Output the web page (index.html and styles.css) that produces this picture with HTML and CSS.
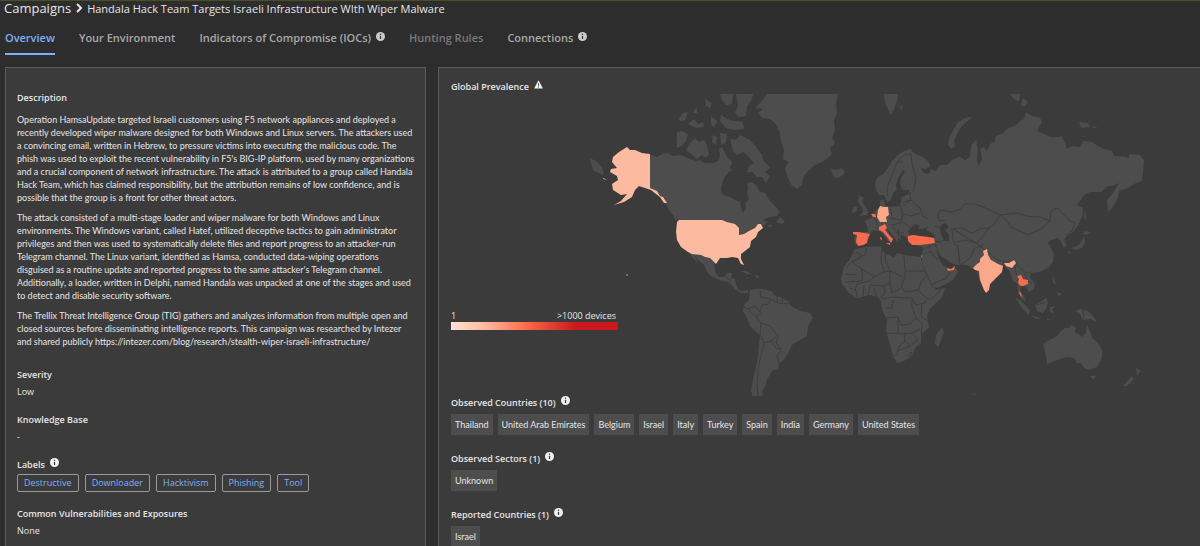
FILE: index.html
```
<!DOCTYPE html>
<html lang="en">
<head>
    <meta charset="UTF-8">
    <meta name="viewport" content="width=device-width, initial-scale=1.0">
    <title>Campaigns - Handala Hack Team</title>
    <link rel="stylesheet" href="styles.css">
</head>
<body>

    <!-- shared icons -->
    <svg class="icon-defs" aria-hidden="true">
        <symbol id="icon-info" viewBox="0 0 10 10">
            <circle cx="5" cy="5" r="5" fill="#f2f2f2"/>
            <path d="M5 4.2v3.6" stroke="#3b3b3b" stroke-width="1.4" fill="none"/>
            <circle cx="5" cy="2.5" r="0.8" fill="#3b3b3b"/>
        </symbol>
        <symbol id="icon-warning" viewBox="0 0 10 10">
            <path d="M5 0.4L9.9 9.4H0.1z" fill="#f2f2f2"/>
            <path d="M5 3.4v3M5 7.2v1.2" stroke="#3b3b3b" stroke-width="1"/>
        </symbol>
    </svg>

    <nav class="breadcrumb">
        <a href="#">Campaigns</a>
        <svg class="chevron" viewBox="0 0 6 10"><path d="M1 1l4 4-4 4" fill="none" stroke="#e6e6e6" stroke-width="2"/></svg>
        <h1>Handala Hack Team Targets Israeli Infrastructure WIth Wiper Malware</h1>
    </nav>

    <div class="tabs">
        <a href="#" class="tab active">Overview</a>
        <a href="#" class="tab">Your Environment</a>
        <a href="#" class="tab">Indicators of Compromise (IOCs)<svg class="info"><use href="#icon-info"/></svg></a>
        <a href="#" class="tab disabled">Hunting Rules</a>
        <a href="#" class="tab">Connections<svg class="info"><use href="#icon-info"/></svg></a>
    </div>

    <main class="panels">
        <section class="panel details">
            <h2>Description</h2>
            <div class="description">
                <p>Operation HamsaUpdate targeted Israeli customers using F5 network appliances and deployed a<br>
                recently developed wiper malware designed for both Windows and Linux servers. The attackers used<br>
                a convincing email, written in Hebrew, to pressure victims into executing the malicious code. The<br>
                phish was used to exploit the recent vulnerability in F5's BIG-IP platform, used by many organizations<br>
                and a crucial component of network infrastructure. The attack is attributed to a group called Handala<br>
                Hack Team, which has claimed responsibility, but the attribution remains of low confidence, and is<br>
                possible that the group is a front for other threat actors.</p>
                <p>The attack consisted of a multi-stage loader and wiper malware for both Windows and Linux<br>
                environments. The Windows variant, called Hatef, utilized deceptive tactics to gain administrator<br>
                privileges and then was used to systematically delete files and report progress to an attacker-run<br>
                Telegram channel. The Linux variant, identified as Hamsa, conducted data-wiping operations<br>
                disguised as a routine update and reported progress to the same attacker's Telegram channel.<br>
                Additionally, a loader, written in Delphi, named Handala was unpacked at one of the stages and used<br>
                to detect and disable security software.</p>
                <p>The Trellix Threat Intelligence Group (TIG) gathers and analyzes information from multiple open and<br>
                closed sources before disseminating intelligence reports. This campaign was researched by Intezer<br>
                and shared publicly https://intezer.com/blog/research/stealth-wiper-israeli-infrastructure/</p>
            </div>

            <h2>Severity</h2>
            <p class="value">Low</p>

            <h2>Knowledge Base</h2>
            <p class="value">-</p>

            <h2>Labels<svg class="info"><use href="#icon-info"/></svg></h2>
            <div class="labels">
                <a href="#">Destructive</a>
                <a href="#">Downloader</a>
                <a href="#">Hacktivism</a>
                <a href="#">Phishing</a>
                <a href="#">Tool</a>
            </div>

            <h2>Common Vulnerabilities and Exposures</h2>
            <p class="value">None</p>
        </section>

        <section class="panel prevalence">
            <h2>Global Prevalence<svg class="info"><use href="#icon-warning"/></svg></h2>
            <div class="map">
                <svg class="world" viewBox="451 94 749 302" role="img" aria-label="World map of campaign prevalence">
                    <g class="land">
                        <!-- North America -->
                        <path d="M649 154L657 157L662 154L667 153L673 156L680 155L690 159L696 161L700 160L704 163L713 163L718 161L720 157L719 149L722 147L725 153L727 157L732 162L730 168L728 173L724 178L722 185L721 190L723 195L730 197L735 200L740 202L741 208L743 213L746 208L745 203L749 199L747 193L748 188L747 183L752 182L757 186L759 191L765 193L769 200L774 205L780 212L777 216L770 217L763 220L768 222L764 226L760 223L755 228L740 236L736 225L726 221L679 220L675 216L670 212L666 204L658 195L649 188z"/>
                        <path d="M776 222L780 217L785 222L782 224zM768 225L773 225L769 228zM672 213L678 219L676 221z"/>
                        <path d="M730 139L736 140L740 135L746 138L750 140L756 147L762 155L763 160L770 168L765 172L770 176L766 183L762 177L757 177L752 172L747 172L749 166L754 163L748 156L743 152L737 155L733 151z"/>
                        <path d="M686 150L689 144L695 138L699 142L704 140L707 145L709 154L706 158L702 155L697 159L692 155z"/>
                        <path d="M677 132L682 131L688 134L686 141L683 145L677 148zM679 119L683 113L688 112L685 120L680 121zM688 124L694 119L698 124L703 122L704 127L696 128z"/>
                        <path d="M720 94H733L732 104L726 105L722 100zM736 94H753L751 101L747 106L746 116L739 117L735 113L738 105zM721 115L727 119L734 121L743 122L744 129L734 130L726 128L720 121z"/>
                        <path d="M705 99L712 103L710 108L706 106zM711 116L717 121L714 128L711 124zM713 135L717 137L716 145L712 142zM720 133L727 134L726 143L721 145zM723 166L729 165L732 171L727 172zM694 110L697 108L697 113L693 113z"/>
                        <path d="M688 252L700 255L705 257L710 258L714 263L715 272L719 277L724 277L727 273L732 273L731 278L735 279L736 284L738 289L742 291L748 290L748 293L741 293L736 290L729 282L722 281L712 277L707 272L704 265L697 259L694 254L698 264L693 258z"/>
                        <path d="M740 271L746 271L752 274L747 274zM754 275L760 276L757 278zM746 277L749 278L747 279z"/>
                        <!-- Greenland, Iceland, Svalbard -->
                        <path d="M767 94H838L836 104L837 113L834 121L835 130L832 138L835 143L830 148L832 154L824 161L815 165L807 172L803 178L802 185L797 189L792 186L788 178L785 169L788 162L783 159L784 150L781 141L780 133L776 124L770 119L762 118L758 113L763 109L755 108L760 103z"/>
                        <path d="M831 169L836 170L842 168L845 172L842 176L837 178L833 176zM884 94H898L897 101L894 109L891 115L888 109L885 103zM900 105L903 107L901 111z"/>
                        <!-- South America -->
                        <path d="M750 290L756 289L762 289L772 291L774 295L780 297L788 301L792 307L801 311L810 313L813 318L808 326L807 336L800 340L792 345L787 355L783 361L779 363L778 369L772 371L770 375L767 379L765 387L762 391L763 397L753 397L751 390L754 375L758 358L759 345L760 335L755 331L750 326L747 318L743 311L744 305L749 300z"/>
                        <!-- Europe and Asia -->
                        <path d="M875 182L878 177L883 174L888 168L892 161L898 155L904 151L910 149L915 154L923 157L929 162L930 166L926 169L921 168L924 173L929 174L931 169L936 171L940 165L947 165L953 159L960 157L965 160L970 157L971 145L976 140L978 150L977 160L979 166L982 158L980 149L984 147L987 151L990 144L994 142L996 136L1003 133L1008 128L1015 126L1020 121L1024 119L1026 112L1032 116L1040 118L1042 122L1037 131L1044 134L1050 137L1058 137L1062 136L1065 143L1067 149L1072 146L1080 147L1083 141L1092 142L1098 146L1104 149L1112 151L1114 156L1127 157L1128 159L1130 154L1140 155L1144 160L1143 173L1142 181L1134 184L1128 188L1119 191L1117 200L1112 208L1108 212L1107 200L1113 193L1119 183L1113 186L1108 186L1101 192L1090 192L1084 195L1077 205L1083 208L1082 217L1078 225L1073 232L1068 235L1064 239L1067 245L1064 248L1061 242L1058 238L1051 240L1048 243L1051 248L1054 254L1053 262L1048 268L1039 272L1031 273L1030 277L1035 284L1034 289L1029 292L1026 287L1021 286L1020 291L1024 296L1026 302L1021 298L1018 292L1017 283L1013 281L1010 272L1004 265L990 284L986 292L980 281L976 270L973 269L967 265L957 265L951 263L946 259L940 256L936 250L939 259L944 266L949 269L956 268L958 272L953 280L946 284L937 288L933 287L928 276L922 264L922 254L923 247L911 244L905 236L900 235L901 241L904 244L899 244L890 232L886 228L893 240L890 243L880 231L872 230L870 234L868 240L863 246L855 244L854 238L856 235L853 233L860 232L868 232L867 225L864 221L871 218L873 213L880 207L880 201L884 199L885 205L890 207L900 206L902 196L910 194L909 190L903 190L900 184L901 178L905 171L903 170L898 178L896 185L897 190L893 193L891 200L887 202L884 195L879 195L876 190z"/>
                        <path d="M859 195L864 198L862 201L865 206L868 211L867 215L859 216L863 212L862 208L860 205L858 201zM853 207L857 206L857 211L852 213z"/>
                        <path d="M972 117L965 118L957 123L953 131L949 138L948 145L951 149L955 146L954 141L957 134L961 127zM1010 94H1020L1019 101L1014 99zM1023 98L1028 102L1024 107L1021 105zM1079 122L1088 123L1090 127L1081 128zM1093 126L1098 128L1093 128zM1082 136L1087 137L1083 137zM590 159L595 160L602 167L604 175L598 173L593 170z"/>
                        <path d="M1085 208L1086 220L1084 218zM1085 231L1090 232L1086 235L1083 234zM1084 236L1085 242L1082 248L1075 250L1071 248L1079 245zM1068 250L1071 252L1069 255z"/>
                        <!-- Africa -->
                        <path d="M855 249L865 247L881 246L883 251L886 254L894 257L897 253L905 255L921 257L923 267L928 278L932 286L936 290L945 288L942 297L936 303L930 309L927 316L929 327L921 335L921 343L915 348L912 356L904 361L897 363L893 356L890 344L886 332L887 320L882 310L881 301L878 297L870 295L857 298L849 293L842 284L841 278L844 267L850 259zM942 327L944 332L940 343L938 347L935 343L936 335z"/>
                        <!-- South-east Asia and Oceania -->
                        <path d="M1015 297L1020 300L1026 306L1030 311L1029 315L1022 308zM1031 316L1042 318L1036 319zM1035 305L1041 302L1046 298L1048 303L1046 309L1043 313L1037 311zM1050 307L1056 306L1052 309L1054 314L1050 312zM1053 277L1056 284L1053 283zM1057 292L1062 294L1059 296zM1070 308L1075 311L1080 309L1088 311L1093 316L1097 322L1090 319L1083 320L1080 314zM1047 319L1052 319L1047 320z"/>
                        <path d="M1043 344L1049 340L1056 337L1060 332L1065 328L1069 328L1071 325L1076 327L1075 332L1083 337L1086 332L1087 325L1090 331L1092 338L1098 343L1102 350L1102 358L1097 367L1089 370L1084 368L1081 363L1077 363L1074 358L1066 357L1055 361L1047 364L1046 355zM1090 376L1096 376L1093 380zM1136 368L1141 371L1137 376zM1132 376L1134 379L1127 386L1123 386z"/>
                        <path d="M972 394L977 394L974 395z"/>
                    </g>
                    <!-- inland water -->
                    <path class="sea" d="M908 232L911 227L916 224L920 226L918 229L923 229L929 227L926 230L934 234L935 238L922 236L912 239zM940 226L945 223L949 227L945 230L949 235L949 241L944 241L941 234zM901 195L909 193L903 197zM876 231L880 231L885 238L890 243L898 243L898 237L903 244L908 244L922 247L921 256L905 254L897 253L894 257L886 253L884 247L869 244L872 236z"/>
                    <g class="borders">
                        <path d="M887 196L888 185L893 173L897 162L904 155M904 155L911 154L912 164L916 178L914 189L910 194M897 162L903 162M910 194L911 200L903 202M903 206L911 200L920 208L923 216L928 219M900 206L903 214L911 216L920 213M903 214L902 220L890 218M890 225L897 224L903 222L910 227M870 216L877 221L877 229M893 227L897 233L904 233M890 208L892 216M898 229L899 237M935 226L941 228M938 214L941 210L952 212L960 209L965 204L975 204L983 207L989 210L1000 215L994 224L989 228L980 229L972 233L962 228L950 229M938 214L939 221L946 220M952 230L953 241M953 229L966 237L974 242M957 242L966 240L977 243L985 234L989 228M953 241L958 247L960 265M960 265L970 258L974 249L983 244M948 238L940 242L935 241M935 244L940 256M1000 215L1007 221L1011 227L1028 235L1041 229L1050 221L1040 217L1026 216L1018 213L1000 215M1050 221L1051 211L1057 208L1063 214L1070 221L1075 223L1072 231L1066 235M974 242L983 248L988 252L996 259L1005 262L1014 260L1018 266L1026 273L1031 272M1003 262L1006 268M1014 264L1016 273L1018 277M1024 273L1028 281L1032 283M922 250L930 246L935 244M923 255L930 251L938 260M929 249L929 245M932 284L945 279L951 272"/>
                        <path d="M856 252L862 256L852 262L846 268M866 248L866 254L852 262M852 262L862 269L862 281L845 282M862 269L874 277L884 272L881 262L882 247M874 277L870 281L857 284L855 290M884 272L890 271L905 278M885 254L886 262L890 271M904 255L905 271L924 271M905 271L905 278L901 286L905 292L918 290L922 280L926 277M870 285L884 286L885 292L881 299M870 285L868 296M890 271L890 283L884 286M890 283L892 293L901 288M882 299L892 297L905 298L912 298L916 305L927 302M918 290L924 296L930 300L941 290M922 303L921 317L928 321M886 308L892 308L893 300M886 318L898 317L901 325L910 324L916 318L912 307L912 299M886 333L904 334L905 341L899 346L897 355L894 356M904 334L912 333L920 329M905 341L910 346L918 340L913 334M898 317L898 333M916 318L922 324L921 336M899 350L906 348L910 346M908 354L912 352L911 356L907 356M845 274L857 275M864 285L863 296M874 288L876 296M850 288L856 290L857 297"/>
                        <path d="M760 290L761 297L770 299L769 304L762 305L760 312L755 306L748 309L744 307M748 309L756 317L761 323L760 334M756 317L762 313M770 299L778 303L791 304M761 323L770 326L778 336L776 342L781 350L777 356L779 363M760 334L764 343L771 341L776 337M764 343L761 355L758 370L757 384L758 397M771 341L777 349L782 348M777 294L777 302M783 298L782 304M716 273L720 271M726 277L731 281"/>
                        <path d="M1083 310L1084 319M1037 305L1046 302"/>
                    </g>
                    <g class="level-low">
                        <!-- United States -->
                        <path d="M679 220H722L727 222L735 224L739 228L739 235L744 234L749 231L755 228L758 224L761 224L763 228L758 232L756 237L751 241L750 247L745 251L741 254L741 259L744 265L741 264L738 258L732 257L727 258L720 258L716 264L710 258L705 257L701 255L692 254L688 252L681 247L677 240L676 232L677 222z"/>
                        <path d="M627 147L630 150L635 150L642 153L650 154V188L657 191L660 196L663 197L667 203L664 203L660 197L656 194L651 190L645 188L639 186L635 190L632 197L624 202L614 205L621 201L627 194L621 195L613 190L612 184L618 180L617 176L610 172L611 169L617 168L612 162L613 157L619 152zM603 178L607 180L603 179zM626 274L628 275L627 276z"/>
                        <path class="mid" d="M987 249L983 251L984 255L980 259L980 262L977 264L973 268L975 270L979 271L980 280L984 290L986 293L989 290L990 284L997 277L1002 272L1003 266L998 264L991 260L988 255zM1004 263L1009 263L1014 260L1016 263L1012 268L1009 267L1006 266z"/>
                        <path class="mid" d="M880 206L884 207L888 207L889 215L886 217L887 222L880 222L877 217L878 210z"/>
                    </g>
                    <g class="level-high">
                        <path d="M853 232L858 232L870 234L868 238L867 243L863 245L858 246L856 242L857 235L853 234z"/>
                        <path d="M879 227L885 224L887 228L885 230L889 235L893 239L891 243L888 238L883 232L879 230zM880 237L882 238L881 241zM886 243L890 243L890 245z"/>
                        <path d="M908 236L913 235L920 236L928 237L934 238L935 243L928 244L920 245L912 245L908 241z"/>
                        <path d="M871 214L875 214L876 217L873 217zM947 268L951 269L955 266L954 270L948 271zM921 255L922 256L921 258z"/>
                        <path d="M1017 276L1021 275L1023 279L1028 280L1028 284L1023 286L1021 286L1018 283L1019 279zM1019 291L1021 293L1022 297L1020 295z"/>
                    </g>
                </svg>
                <div class="legend">
                    <div class="legend-text"><span>1</span><span>&gt;1000 devices</span></div>
                    <div class="legend-bar"></div>
                </div>
            </div>

            <h2>Observed Countries (10)<svg class="info"><use href="#icon-info"/></svg></h2>
            <div class="chips">
                <span>Thailand</span>
                <span>United Arab Emirates</span>
                <span>Belgium</span>
                <span>Israel</span>
                <span>Italy</span>
                <span>Turkey</span>
                <span>Spain</span>
                <span>India</span>
                <span>Germany</span>
                <span>United States</span>
            </div>

            <h2>Observed Sectors (1)<svg class="info"><use href="#icon-info"/></svg></h2>
            <div class="chips"><span>Unknown</span></div>

            <h2>Reported Countries (1)<svg class="info"><use href="#icon-info"/></svg></h2>
            <div class="chips"><span>Israel</span></div>
        </section>
    </main>

</body>
</html>
```
FILE: styles.css
```
* {
    box-sizing: border-box;
}
body {
    margin: 0;
    height: 100vh;
    overflow: hidden;
    display: flex;
    flex-direction: column;
    background-color: #2d2d2d;
    border-top: 1px solid #4a4f22;
    color: #e6e6e6;
    font-family: "Open Sans", "Noto Sans", sans-serif;
    font-size: 9px;
    line-height: 13px;
}
h1, h2, p {
    margin: 0;
}
a {
    text-decoration: none;
}
.icon-defs {
    position: absolute;
    width: 0;
    height: 0;
}
.info {
    width: 9px;
    height: 9px;
    margin-left: 5px;
    vertical-align: 1px;
}
.breadcrumb {
    display: flex;
    align-items: center;
    flex-shrink: 0;
    height: 14px;
    padding-left: 4px;
    white-space: nowrap;
}
.breadcrumb a {
    color: #e6e6e6;
    font-size: 13px;
}
.breadcrumb h1 {
    font-size: 11px;
    font-weight: normal;
}
.chevron {
    width: 6px;
    height: 10px;
    margin: 0 5px;
}
.tabs {
    display: flex;
    flex-shrink: 0;
    gap: 24px;
    padding: 13px 5px 12px;
}
.tab {
    height: 27px;
    color: #a8a8a8;
    font-size: 11px;
    font-weight: 600;
    line-height: 20px;
    white-space: nowrap;
}
.tab .info {
    fill: #a8a8a8;
    opacity: 0.8;
}
.tab.active {
    color: #7fb0f5;
    border-bottom: 2px solid #7fb0f5;
}
.tab.disabled {
    color: #7a7a7a;
}
.panels {
    display: flex;
    flex: 1;
    gap: 12px;
    min-height: 0;
    padding-left: 5px;
}
.panel {
    background-color: #3b3b3b;
    border: 1px solid #5c5c5c;
    border-bottom: none;
    min-width: 0;
}
.panel h2 {
    height: 13px;
    font-size: 9px;
    font-weight: 600;
    white-space: nowrap;
}
.details {
    flex: 0 0 421px;
    padding: 23px 11px 0;
}
.description {
    margin: 9px 0 20px;
    font-family: Lato, "Open Sans", sans-serif;
    white-space: nowrap;
}
.description p + p {
    margin-top: 7px;
}
.value {
    margin: 4px 0 15px;
}
.labels {
    display: flex;
    gap: 6px;
    margin: 3px 0 15px;
}
.labels a {
    padding: 1px 6px;
    border: 1px solid #9a9a9a;
    border-radius: 2px;
    color: #7fb0f5;
    line-height: 14px;
}
.prevalence {
    flex: 1;
    padding-top: 12px;
    border-right: none;
}
.prevalence h2, .chips {
    margin-left: 12px;
}
.map {
    position: relative;
    margin: 1px 0 0 12px;
}
.world {
    display: block;
    width: 100%;
}
.land {
    fill: #4d4d4d;
}
.sea {
    fill: #3b3b3b;
}
.borders {
    fill: none;
    stroke: #3e3e3e;
    stroke-linejoin: round;
}
.level-low {
    fill: #fcbba1;
}
.level-low .mid {
    fill: #fca78a;
}
.level-high {
    fill: #fb6a4a;
}
.legend {
    position: absolute;
    left: 0;
    bottom: 66px;
    width: 167px;
}
.legend-text {
    display: flex;
    justify-content: space-between;
    padding-right: 2px;
}
.legend-bar {
    height: 8px;
    background: linear-gradient(to right, #fee0d2, #fcbba1 20%, #fb6a4a 45%, #cb181d 75%, #cb181d);
}
.chips {
    display: flex;
    gap: 5px;
    margin-top: 5px;
    margin-bottom: 17px;
    font-family: Lato, "Open Sans", sans-serif;
}
.chips span {
    padding: 4px;
    background-color: #4d4d4d;
    white-space: nowrap;
}
```
